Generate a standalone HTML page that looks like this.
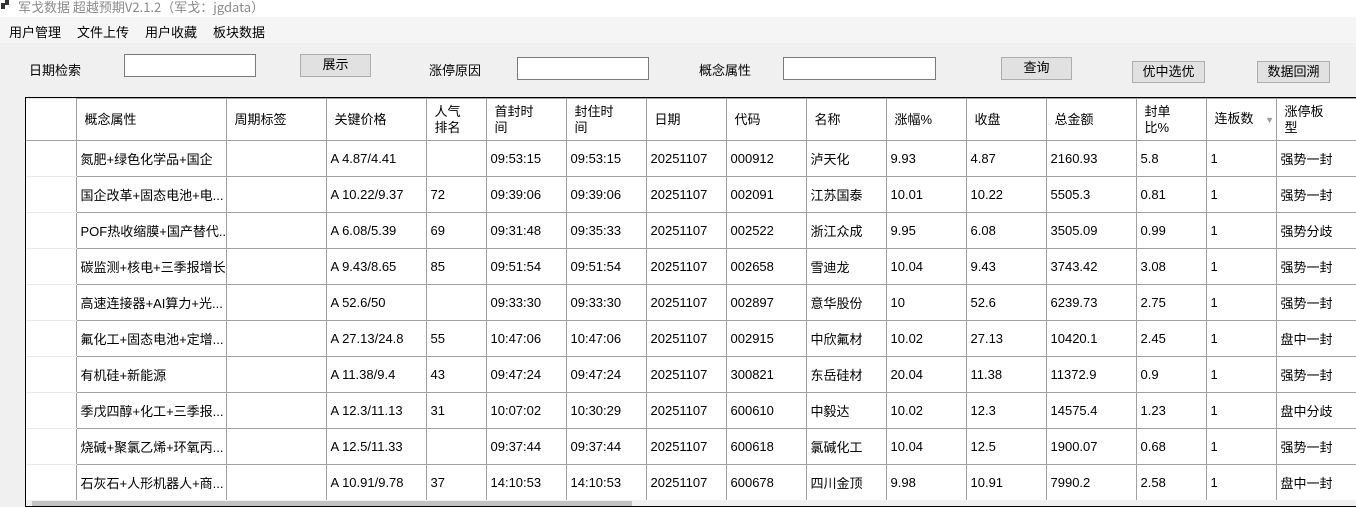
<!DOCTYPE html><html><head><meta charset="utf-8"><style>
*{margin:0;padding:0;box-sizing:border-box}
body{width:1356px;height:504px;overflow:hidden;background:#f0f0f0;font-family:"Liberation Sans","Noto Sans CJK SC",sans-serif;font-size:13px;color:#000;position:relative}
.a{position:absolute;white-space:nowrap}
.title{left:0;top:0;width:1356px;height:17px;background:#fff;color:#8a8a8a;font-size:13px;line-height:14px;padding-left:18px;font-family:"Noto Sans CJK SC",sans-serif}
.menu{left:0;top:17px;width:1356px;height:26px;background:#f5f5f5}
.inp{position:absolute;background:#fff;border:1px solid #7a7a7a}
.btn{position:absolute;background:#e1e1e1;border:1px solid #adadad;text-align:center;line-height:20px}
.tbl{position:absolute;left:25px;top:97px;width:1340px;height:410px;border:1px solid #000;border-right:none;background:#fff;overflow:hidden}
table{border-collapse:collapse;table-layout:fixed;position:absolute;left:0;top:0;width:1330px}
td{border:1px solid #a0a0a0;height:36px;padding-left:4px;overflow:hidden;white-space:nowrap;font-size:13px}
tr.h td{height:42px;padding-left:8px;line-height:16px}
td.rh{border-left:none;border-top-color:#e8e8e8;border-bottom-color:#e8e8e8}
tr.h td.rh{border-bottom-color:#a0a0a0}
</style></head><body>
<div class="a title"><span style="position:absolute;left:1px;top:3px;width:4px;height:6px;background:#333"></span><span style="position:absolute;left:5px;top:0px;width:4px;height:5px;background:#333"></span>军戈数据 超越预期V2.1.2（军戈：jgdata）</div>
<div class="a menu"><span class="a" style="left:9px;top:5px">用户管理</span><span class="a" style="left:77px;top:5px">文件上传</span><span class="a" style="left:145px;top:5px">用户收藏</span><span class="a" style="left:213px;top:5px">板块数据</span></div>
<span class="a" style="left:29px;top:60px">日期检索</span>
<div class="inp" style="left:124px;top:54px;width:132px;height:23px"></div>
<div class="btn" style="left:300px;top:54px;width:71px;height:23px">展示</div>
<span class="a" style="left:429px;top:60px">涨停原因</span>
<div class="inp" style="left:517px;top:57px;width:132px;height:23px"></div>
<span class="a" style="left:699px;top:60px">概念属性</span>
<div class="inp" style="left:783px;top:57px;width:153px;height:23px"></div>
<div class="btn" style="left:1001px;top:57px;width:71px;height:23px">查询</div>
<div class="btn" style="left:1132px;top:61px;width:73px;height:22px">优中选优</div>
<div class="btn" style="left:1257px;top:61px;width:73px;height:22px">数据回溯</div>
<div class="tbl"><table>
<colgroup><col style="width:50px"><col style="width:150px"><col style="width:100px"><col style="width:100px"><col style="width:60px"><col style="width:80px"><col style="width:80px"><col style="width:80px"><col style="width:80px"><col style="width:80px"><col style="width:80px"><col style="width:80px"><col style="width:90px"><col style="width:70px"><col style="width:70px"><col style="width:80px"></colgroup>
<tr class="h"><td class="rh"></td><td>概念属性</td><td>周期标签</td><td>关键价格</td><td>人气<br>排名</td><td>首封时<br>间</td><td>封住时<br>间</td><td>日期</td><td>代码</td><td>名称</td><td>涨幅%</td><td>收盘</td><td>总金额</td><td>封单<br>比%</td><td>连板数 <span style="color:#999;font-size:9px;margin-left:8px">▼</span></td><td>涨停板<br>型</td></tr>
<tr><td class="rh"></td><td>氮肥+绿色化学品+国企</td><td></td><td>A 4.87/4.41</td><td></td><td>09:53:15</td><td>09:53:15</td><td>20251107</td><td>000912</td><td>泸天化</td><td>9.93</td><td>4.87</td><td>2160.93</td><td>5.8</td><td>1</td><td>强势一封</td></tr>
<tr><td class="rh"></td><td>国企改革+固态电池+电...</td><td></td><td>A 10.22/9.37</td><td>72</td><td>09:39:06</td><td>09:39:06</td><td>20251107</td><td>002091</td><td>江苏国泰</td><td>10.01</td><td>10.22</td><td>5505.3</td><td>0.81</td><td>1</td><td>强势一封</td></tr>
<tr><td class="rh"></td><td>POF热收缩膜+国产替代...</td><td></td><td>A 6.08/5.39</td><td>69</td><td>09:31:48</td><td>09:35:33</td><td>20251107</td><td>002522</td><td>浙江众成</td><td>9.95</td><td>6.08</td><td>3505.09</td><td>0.99</td><td>1</td><td>强势分歧</td></tr>
<tr><td class="rh"></td><td>碳监测+核电+三季报增长</td><td></td><td>A 9.43/8.65</td><td>85</td><td>09:51:54</td><td>09:51:54</td><td>20251107</td><td>002658</td><td>雪迪龙</td><td>10.04</td><td>9.43</td><td>3743.42</td><td>3.08</td><td>1</td><td>强势一封</td></tr>
<tr><td class="rh"></td><td>高速连接器+AI算力+光...</td><td></td><td>A 52.6/50</td><td></td><td>09:33:30</td><td>09:33:30</td><td>20251107</td><td>002897</td><td>意华股份</td><td>10</td><td>52.6</td><td>6239.73</td><td>2.75</td><td>1</td><td>强势一封</td></tr>
<tr><td class="rh"></td><td>氟化工+固态电池+定增...</td><td></td><td>A 27.13/24.8</td><td>55</td><td>10:47:06</td><td>10:47:06</td><td>20251107</td><td>002915</td><td>中欣氟材</td><td>10.02</td><td>27.13</td><td>10420.1</td><td>2.45</td><td>1</td><td>盘中一封</td></tr>
<tr><td class="rh"></td><td>有机硅+新能源</td><td></td><td>A 11.38/9.4</td><td>43</td><td>09:47:24</td><td>09:47:24</td><td>20251107</td><td>300821</td><td>东岳硅材</td><td>20.04</td><td>11.38</td><td>11372.9</td><td>0.9</td><td>1</td><td>强势一封</td></tr>
<tr><td class="rh"></td><td>季戊四醇+化工+三季报...</td><td></td><td>A 12.3/11.13</td><td>31</td><td>10:07:02</td><td>10:30:29</td><td>20251107</td><td>600610</td><td>中毅达</td><td>10.02</td><td>12.3</td><td>14575.4</td><td>1.23</td><td>1</td><td>盘中分歧</td></tr>
<tr><td class="rh"></td><td>烧碱+聚氯乙烯+环氧丙...</td><td></td><td>A 12.5/11.33</td><td></td><td>09:37:44</td><td>09:37:44</td><td>20251107</td><td>600618</td><td>氯碱化工</td><td>10.04</td><td>12.5</td><td>1900.07</td><td>0.68</td><td>1</td><td>强势一封</td></tr>
<tr><td class="rh"></td><td>石灰石+人形机器人+商...</td><td></td><td>A 10.91/9.78</td><td>37</td><td>14:10:53</td><td>14:10:53</td><td>20251107</td><td>600678</td><td>四川金顶</td><td>9.98</td><td>10.91</td><td>7990.2</td><td>2.58</td><td>1</td><td>盘中一封</td></tr>
</table>
<div style="position:absolute;left:0;top:402px;width:1340px;height:8px;background:#f0f0f0"></div>
<div style="position:absolute;left:6px;top:403px;width:600px;height:5px;background:#c2c2c2"></div>
</div>
</body></html>
